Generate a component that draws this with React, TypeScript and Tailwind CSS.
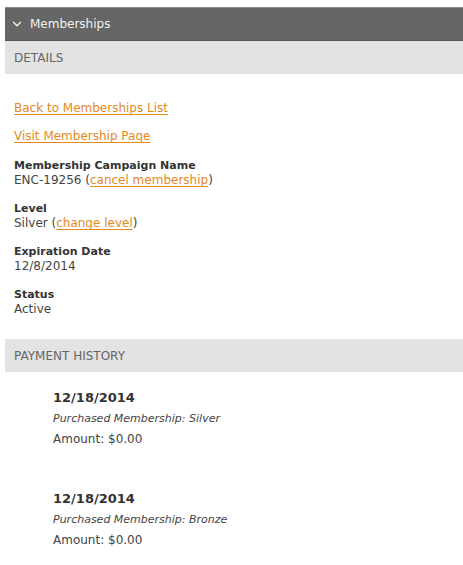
import { ChevronDown } from 'lucide-react'

const font = { fontFamily: '"DejaVu Sans", Verdana, sans-serif' }

function Field({ label, first, children }: { label: string; first?: boolean; children: React.ReactNode }) {
  return (
    <div className={first ? 'mt-[15px]' : 'mt-[14px]'}>
      <p className="text-[11px] font-bold leading-[14px] text-[#333]">{label}</p>
      <p className="leading-[15px] text-[#444]">{children}</p>
    </div>
  )
}

function Link({ children }: { children: React.ReactNode }) {
  return <a href="#" className="text-[#e5891c] underline underline-offset-2">{children}</a>
}

const payments = [
  { date: '12/18/2014', what: 'Purchased Membership: Silver', amount: '$0.00' },
  { date: '12/18/2014', what: 'Purchased Membership: Bronze', amount: '$0.00' },
]

export default function App() {
  return (
    <div className="h-[565px] w-[463px] overflow-hidden bg-white pl-[5px] pt-[7px] text-[12px]" style={font}>
      <div className="flex h-[34px] items-center gap-[6px] border-t border-b border-t-[#8a8a8a] border-b-[#555] bg-[#666] pl-[5px] text-[12px] text-[#f2f2f2]">
        <ChevronDown className="h-[14px] w-[14px]" strokeWidth={2.2} />
        <span>Memberships</span>
      </div>

      <div className="flex h-[33px] items-center bg-[#e3e3e3] pl-[9px] text-[12px] text-[#666]">DETAILS</div>

      <div className="pl-[9px] pt-[27px] pb-[22px]">
        <div className="leading-[15px]">
          <Link>Back to Memberships List</Link>
        </div>
        <div className="mt-[13px] leading-[15px]">
          <Link>Visit Membership Page</Link>
        </div>
        <Field label="Membership Campaign Name" first>
          ENC-19256 (<Link>cancel membership</Link>)
        </Field>
        <Field label="Level">
          Silver (<Link>change level</Link>)
        </Field>
        <Field label="Expiration Date">12/8/2014</Field>
        <Field label="Status">Active</Field>
      </div>

      <div className="flex h-[33px] items-center bg-[#e3e3e3] pl-[9px] text-[12px] text-[#666]">PAYMENT HISTORY</div>

      <div className="pl-[48px] pt-[16px]">
        {payments.map((p, i) => (
          <div key={i} className="mb-[40px] text-[#333]">
            <p className="text-[13px] font-bold leading-[20px]">{p.date}</p>
            <p className="text-[11px] italic leading-[21px] text-[#444]">{p.what}</p>
            <p className="leading-[20px] text-[#444]">Amount: {p.amount}</p>
          </div>
        ))}
      </div>
    </div>
  )
}
